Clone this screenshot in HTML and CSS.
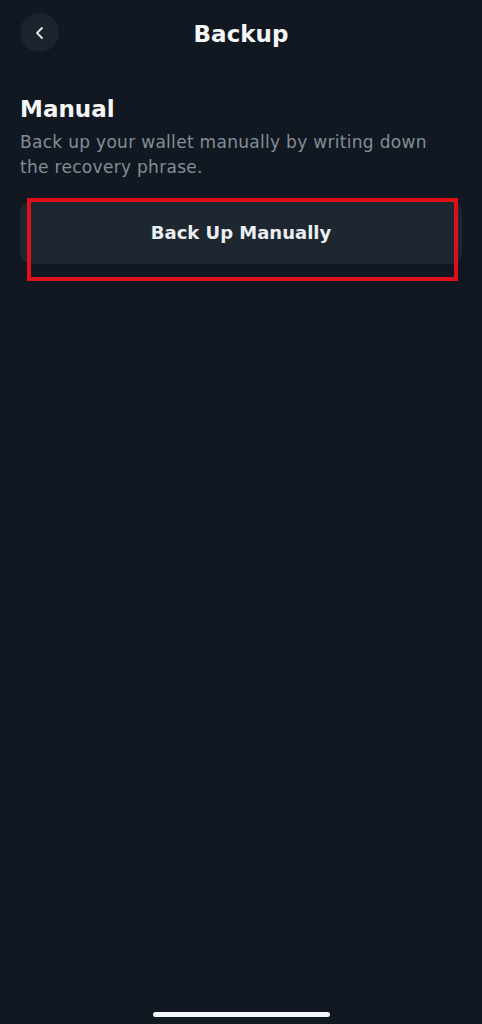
FILE: index.html
```html
<!DOCTYPE html>
<html lang="en">
<head>
    <meta charset="UTF-8">
    <meta name="viewport" content="width=device-width, initial-scale=1.0">
    <title>Backup</title>
    <link rel="stylesheet" href="styles.css">
</head>
<body>

    <div class="screen">
        <header class="topbar">
            <button class="back-btn" aria-label="Back">
                <svg width="14" height="14" viewBox="0 0 14 14">
                    <path d="M9 2 L4 7 L9 12" fill="none" stroke="#e6e9ec" stroke-width="1.8" stroke-linecap="round" stroke-linejoin="round"/>
                </svg>
            </button>
            <h1 class="title">Backup</h1>
        </header>

        <section class="section">
            <h2 class="section-title">Manual</h2>
            <p class="section-text">Back up your wallet manually by writing down the recovery phrase.</p>

            <div class="action-wrap">
                <button class="action-btn">Back Up Manually</button>
                <div class="highlight"></div>
            </div>
        </section>

        <div class="home-indicator"></div>
    </div>

</body>
</html>
```

FILE: styles.css
```css
body {
    margin: 0;
    background: #111821;
    font-family: "DejaVu Sans", "Open Sans", sans-serif;
    color: #ffffff;
}

.screen {
    height: 1024px;
    display: flex;
    flex-direction: column;
    padding: 0 20px;
    box-sizing: border-box;
}

.topbar {
    position: relative;
    height: 66px;
    display: flex;
    align-items: center;
    justify-content: center;
}

.back-btn {
    position: absolute;
    left: 0;
    top: 13px;
    width: 39px;
    height: 39px;
    border-radius: 50%;
    border: none;
    background: #1c232c;
    display: flex;
    align-items: center;
    justify-content: center;
    padding: 0;
}

.title {
    margin: 0 0 -2px;
    font-size: 23px;
    font-weight: 700;
    color: #f4f6f8;
}

.section {
    padding-top: 28px;
    flex: 1;
}

.section-title {
    margin: 0;
    font-size: 23px;
    font-weight: 700;
    line-height: 30px;
    color: #f4f6f8;
}

.section-text {
    margin: 6px 0 0;
    max-width: 420px;
    font-size: 17px;
    line-height: 25px;
    letter-spacing: 0.3px;
    color: #858d97;
}

.action-wrap {
    position: relative;
    margin-top: 21px;
}

.action-btn {
    width: 100%;
    height: 63px;
    border: none;
    border-radius: 12px;
    background: #1e2630;
    color: #eceff2;
    font-family: inherit;
    font-size: 18px;
    font-weight: 600;
}

.highlight {
    position: absolute;
    left: 7px;
    top: -3px;
    width: 431px;
    height: 83px;
    border: 4px solid #e0101a;
    box-sizing: border-box;
}

.home-indicator {
    align-self: center;
    width: 177px;
    height: 5px;
    border-radius: 3px;
    background: #f4f7f9;
    margin-bottom: 7px;
}
```
